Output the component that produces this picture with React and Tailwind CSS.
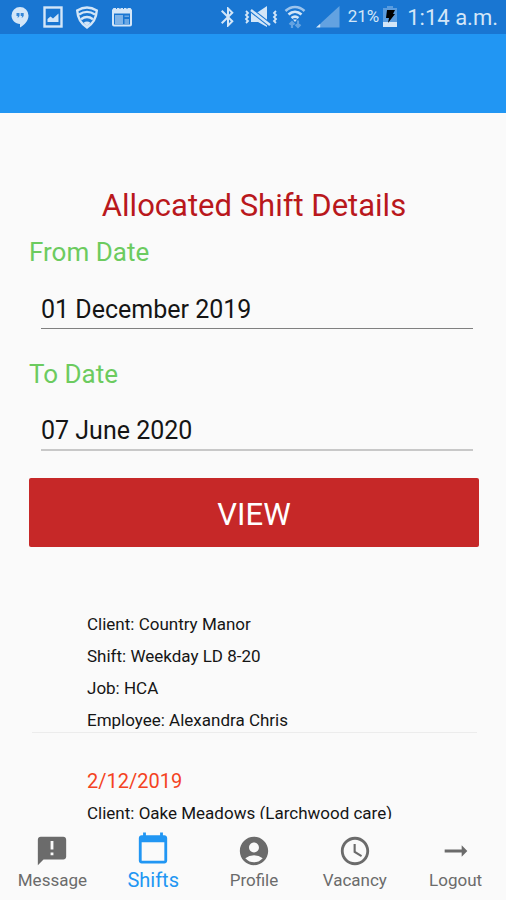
import React, { useState } from 'react';
import { MdAccessTime, MdAccountCircle, MdAnnouncement, MdArrowRightAlt, MdBluetooth, MdCalendarToday } from 'react-icons/md';

const tabs = [
  { label: 'Message', icon: MdAnnouncement },
  { label: 'Shifts', icon: MdCalendarToday },
  { label: 'Profile', icon: MdAccountCircle },
  { label: 'Vacancy', icon: MdAccessTime },
  { label: 'Logout', icon: MdArrowRightAlt }
];

const shifts = [
  {
    id: 1,
    details: ['Client: Country Manor', 'Shift: Weekday LD 8-20', 'Job: HCA', 'Employee: Alexandra Chris']
  },
  {
    id: 2,
    date: '2/12/2019',
    details: ['Client: Oake Meadows (Larchwood care)']
  }
];

const HangoutsIcon = () => (
  <svg className="w-[18px] h-[22px]" viewBox="0 0 18 22" fill="currentColor">
    <path d="M9 1a8.500 8.500 0 0 0-8.500 8.500c0 4.700 3.900 8.400 8.500 8.400V21.500c4.500-2.400 8.500-6.800 8.500-12A8.500 8.500 0 0 0 9 1z" />
    <path fill="#1976d2" opacity=".85" d="M5.500 7h3v3L7.300 11.500h-1L7 10H5.500zM9.700 7h3v3l-1.200 1.500h-1l.7-1.500H9.700z" />
  </svg>
);

const PictureIcon = () => (
  <svg className="w-[20px] h-[22px]" viewBox="0 0 20 22">
    <rect x="1.500" y="1.500" width="17" height="19" fill="none" stroke="currentColor" strokeWidth="2.400" />
    <path fill="currentColor" d="M4.500 16v-3l3-2.500 2.500 2 5.500-5v8.500z" />
  </svg>
);

const ShieldWifiIcon = () => (
  <svg className="w-[24px] h-[23px]" viewBox="0 0 24 23" fill="none" stroke="currentColor" strokeWidth="2.400">
    <path d="M12 1.500c3.500 0 6.500 1 9.800 3-.4 7-3.600 13-9.800 17-6.200-4-9.400-10-9.800-17 3.300-2 6.300-3 9.800-3z" />
    <path d="M4 8.500c5-3.300 11-3.300 16 0M6 13.200c3.800-2.800 8.200-2.800 12 0" />
    <path fill="currentColor" stroke="none" d="M8.500 16.700c2.300-1.700 4.700-1.700 7 0L12 20.500z" />
  </svg>
);

const BrowserIcon = () => (
  <svg className="w-[22px] h-[20px]" viewBox="0 0 22 20">
    <path fill="currentColor" d="M2.500 1h17l1.500 2v3.500H1V3z" />
    <path stroke="#1976d2" strokeWidth="1" d="M5.500 0v2M9 0v2M12.500 0v2M16 0v2" />
    <rect x="2" y="4.500" width="18" height="14" rx="1" fill="none" stroke="currentColor" strokeWidth="2" />
    <path fill="currentColor" opacity=".55" d="M4 8h8v9H4z" />
    <path fill="currentColor" opacity=".45" d="M13.500 8.500H18V10h-4.500zM13.500 12H18v5h-4.500z" />
  </svg>
);

const VibrateMuteIcon = () => (
  <svg className="w-[34px] h-[22px]" viewBox="0 0 34 22" fill="none" stroke="currentColor">
    <path strokeWidth="1.800" d="M2 5l2 2-2 2 2 2-2 2 2 2-2 2M32 5l-2 2 2 2-2 2 2 2-2 2 2 2" />
    <path fill="currentColor" stroke="none" d="M7 6h7l9-6v21l-9-5H7z" />
    <path stroke="#1976d2" strokeWidth="4.600" d="M7 4l19 15" />
    <path strokeWidth="2.400" d="M7 4l19 15" />
  </svg>
);

const WifiIcon = () => (
  <svg className="w-[22px] h-[24px]" viewBox="0 0 22 24" fill="none" stroke="currentColor" strokeWidth="2.600">
    <path opacity=".7" d="M1.500 6c5.700-5.300 13.300-5.300 19 0" />
    <path d="M4.500 9.500c3.900-3.500 9.100-3.500 13 0M7.500 13c2.200-1.700 4.800-1.700 7 0" />
    <path fill="currentColor" stroke="none" d="M9 14.500h4L11 17z" />
    <path opacity=".4" strokeWidth="2.200" d="M8 23v-6M5.500 19.500L8 17l2.500 2.500M14 15.500v6M11.500 19.500L14 22l2.500-2.500" />
  </svg>
);

const SignalIcon = () => (
  <svg className="w-[24px] h-[22px]" viewBox="0 0 24 22" fill="currentColor">
    <path opacity=".4" d="M23.500 0v21.500H5V17z" />
    <path d="M0 21.500l4.500-4v4z" />
  </svg>
);

const BatteryIcon = () => (
  <svg className="w-[14px] h-[22px]" viewBox="0 0 14 22">
    <path fill="currentColor" opacity=".35" d="M4 0h6v2h4v14H0V2h4z" />
    <path fill="currentColor" d="M0 16h14v5H0z" />
    <path fill="#000" d="M4 4h8l-2 4h2L5 17l1-5H3z" />
  </svg>
);

const StatusBar = () => (
  <div className="flex items-center justify-between h-[34px] shrink-0 pl-[11px] pr-2 bg-[#1976d2] text-[#d3e6f8]">
    <div className="flex items-center">
      <HangoutsIcon />
      <div className="ml-[14px] mr-3">
        <PictureIcon />
      </div>
      <ShieldWifiIcon />
      <div className="ml-3">
        <BrowserIcon />
      </div>
    </div>
    <div className="flex items-center">
      <MdBluetooth className="w-6 h-6 mr-1 stroke-current" />
      <VibrateMuteIcon />
      <div className="ml-[6px] mr-[10px]">
        <WifiIcon />
      </div>
      <SignalIcon />
      <span className="ml-2 mr-1 text-[17px]">21%</span>
      <BatteryIcon />
      <span className="ml-[10px] text-[22px]">1:14 a.m.</span>
    </div>
  </div>
);

const DateField = ({ id, label, value, onChange, lineClass }) => (
  <div className="flex flex-col">
    <label htmlFor={id} className="text-[26px] leading-[32px] text-[#6ccb5f]">
      {label}
    </label>
    <div className="pl-3 pr-1.5 pt-[22px]">
      <input
        id={id}
        type="text"
        value={value}
        onChange={(e) => onChange(e.target.value)}
        className={`block w-full h-[39px] text-[25px] text-[#151515] bg-transparent outline-none ${lineClass}`}
      />
    </div>
  </div>
);

const App = () => {
  const [fromDate, setFromDate] = useState('01 December 2019');
  const [toDate, setToDate] = useState('07 June 2020');
  const [activeTab, setActiveTab] = useState('Shifts');

  return (
    <div className="flex flex-col h-screen bg-[#fafafa] font-[Roboto,sans-serif]">
      <StatusBar />
      <header className="h-[79px] shrink-0 bg-[#2196f3]" />

      <main className="flex flex-col flex-1 min-h-0 pl-[29px] pr-[27px] pt-[72px]">
        <h1 className="text-[31px] leading-[42px] text-center text-[#b9181c]">Allocated Shift Details</h1>

        <form className="flex flex-col mt-[9px]" onSubmit={(e) => e.preventDefault()}>
          <DateField id="from-date" label="From Date" value={fromDate} onChange={setFromDate} lineClass="border-b border-[#808080]" />
          <div className="mt-[29px]">
            <DateField id="to-date" label="To Date" value={toDate} onChange={setToDate} lineClass="border-b-2 border-[#c8c8c8]" />
          </div>
          <button type="submit" className="h-[69px] mt-[27px] pt-1.5 rounded-[2px] bg-[#c62828] text-white text-[31px] cursor-pointer">
            VIEW
          </button>
        </form>

        <ul className="flex-1 min-h-0 mt-[65px] overflow-hidden">
          {shifts.map((shift) => (
            <li key={shift.id} className="flex flex-col gap-2 ml-[3px] mr-0.5 pl-[55px] border-b border-[#ececec]">
              {shift.date && <div className="pt-9 text-[20px] leading-6 text-[#f4431f]">{shift.date}</div>}
              {shift.details.map((line) => (
                <p key={line} className="text-[17px] leading-6 text-[#151515] whitespace-nowrap">
                  {line}
                </p>
              ))}
            </li>
          ))}
        </ul>
      </main>

      <nav className="grid grid-cols-5 h-[81px] shrink-0 pl-0.5">
        {tabs.map(({ label, icon: Icon }) => {
          const active = label === activeTab;
          return (
            <button
              key={label}
              type="button"
              onClick={() => setActiveTab(label)}
              className={`flex flex-col items-center justify-end pb-2 cursor-pointer ${active ? 'text-[#2196f3] text-[20px]' : 'text-[#6b6b6b] text-[17px]'}`}
            >
              <Icon className={`w-[34px] h-[34px] ${active ? 'mb-[3px]' : ''}`} />
              <span className="leading-6">{label}</span>
            </button>
          );
        })}
      </nav>
    </div>
  );
};

export default App;
